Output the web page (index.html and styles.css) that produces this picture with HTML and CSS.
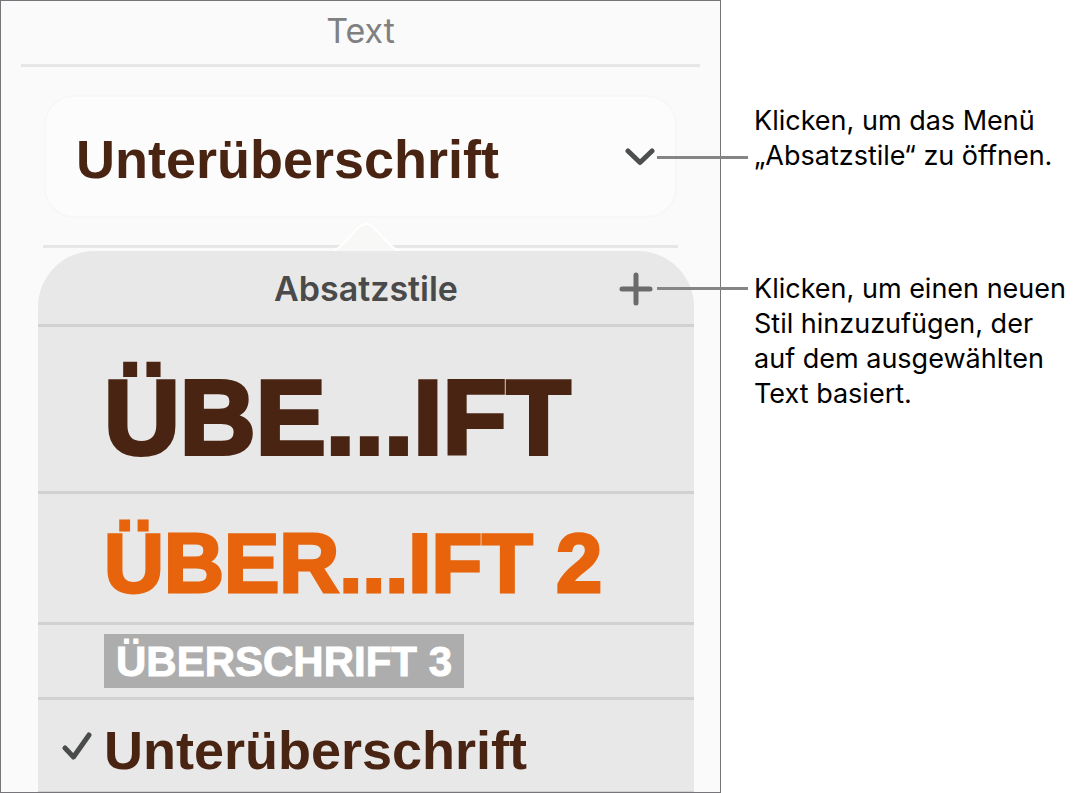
FILE: index.html
```html
<!DOCTYPE html>
<html lang="de">
<head>
    <meta charset="UTF-8">
    <meta name="viewport" content="width=device-width, initial-scale=1.0">
    <title>Absatzstile</title>
    <link rel="stylesheet" href="styles.css">
</head>
<body>
    <main class="figure">
        <section class="panel">
            <h1 class="panel-title">Text</h1>
            <button type="button" class="style-button" aria-haspopup="true" aria-expanded="true">
                <span class="subheading">Unterüberschrift</span>
                <svg class="chevron" viewBox="0 0 30 18" aria-hidden="true">
                    <path d="M3 3 L15 14.5 L27 3"/>
                </svg>
            </button>
            <div class="divider">
                <svg class="arrow" viewBox="0 0 66 28" aria-hidden="true">
                    <path d="M0 28 C5 26 8 23 12 19 L25 5 Q33 -3 41 5 L54 19 C58 23 61 26 66 28"/>
                </svg>
            </div>
            <div class="popover">
                <header class="popover-header">
                    <h2>Absatzstile</h2>
                    <button type="button" class="add-button" aria-label="Stil hinzufügen">
                        <svg viewBox="0 0 34 34" aria-hidden="true">
                            <path d="M17 3 V31 M3 17 H31"/>
                        </svg>
                    </button>
                </header>
                <button type="button" class="style-row row-heading"><span class="heading">ÜBE...IFT</span></button>
                <button type="button" class="style-row row-heading2"><span class="heading2">ÜBER...IFT 2</span></button>
                <button type="button" class="style-row row-heading3"><span class="heading3">ÜBERSCHRIFT 3</span></button>
                <button type="button" class="style-row row-subheading">
                    <svg class="check" viewBox="0 0 30 30" aria-hidden="true">
                        <path d="M3 17 L11.5 26 L27 4"/>
                    </svg>
                    <span class="subheading">Unterüberschrift</span>
                </button>
            </div>
        </section>
        <aside class="notes">
            <p class="note note-menu">Klicken, um das Menü<br>„Absatzstile“ zu öffnen.</p>
            <p class="note note-add">Klicken, um einen neuen<br>Stil hinzuzufügen, der<br>auf dem ausgewählten<br>Text basiert.</p>
        </aside>
    </main>
</body>
</html>
```

FILE: styles.css
```css
* {
    box-sizing: border-box;
}
body {
    margin: 0;
    background-color: #fff;
    font-family: Inter, "Liberation Sans", sans-serif;
    color: #000;
}
h1, h2, p {
    margin: 0;
}
button {
    font-family: inherit;
    border: none;
    padding: 0;
    background: none;
    text-align: left;
    cursor: pointer;
}
svg {
    display: block;
    fill: none;
    stroke-linecap: round;
    stroke-linejoin: round;
}
.figure {
    display: flex;
    align-items: stretch;
}
.panel {
    flex: 1;
    min-width: 0;
    border: 1px solid #77757a;
    background-color: #fafafa;
}
.panel-title {
    margin: 0 20px 28px;
    height: 66px;
    border-bottom: 3px solid #e6e6e6;
    font-size: 34px;
    line-height: 60px;
    font-weight: 400;
    text-align: center;
    color: #808080;
}
.style-button {
    display: flex;
    align-items: center;
    justify-content: space-between;
    width: calc(100% - 86px);
    height: 123px;
    margin: 0 43px;
    padding: 4px 20px 0 30px;
    border: 2px solid #f7f7f7;
    border-radius: 30px;
    background-color: #fcfcfc;
}
.heading, .heading2, .heading3, .subheading {
    font-family: "Liberation Sans", Arial, sans-serif;
    font-weight: 700;
}
.subheading {
    font-size: 54px;
    line-height: 62px;
    color: #4a2413;
}
.chevron {
    width: 30px;
    height: 18px;
    margin-bottom: 4px;
    stroke: #4d4f4f;
    stroke-width: 5;
}
.divider {
    position: relative;
    height: 3px;
    margin: 27px 42px 3px;
    background-color: #e6e6e6;
}
.arrow {
    position: absolute;
    left: calc(50% - 28px);
    bottom: -3px;
    width: 66px;
    height: 28px;
    fill: #f8f8f6;
    stroke: #fff;
    stroke-width: 2;
}
.popover {
    margin: 0 26px 0 37px;
    border-radius: 56px 56px 0 0;
    background-color: #e8e8e8;
}
.popover-header {
    display: grid;
    grid-template-columns: 1fr auto 1fr;
    align-items: center;
    height: 76px;
    padding: 2px 41px 0;
    border-bottom: 3px solid #d1d1d1;
}
.popover-header h2 {
    grid-column: 2;
    font-size: 34px;
    line-height: 40px;
    font-weight: 600;
    color: #4a4a4a;
}
.add-button {
    justify-self: end;
}
.add-button svg {
    width: 34px;
    height: 34px;
    stroke: #6b6b6b;
    stroke-width: 5;
}
.style-row {
    display: flex;
    align-items: center;
    width: 100%;
    padding-left: 66px;
    border-bottom: 3px solid #d1d1d1;
    white-space: nowrap;
}
.row-heading {
    height: 167px;
    padding-top: 18px;
}
.row-heading2 {
    height: 131px;
    padding-top: 12px;
}
.row-heading3 {
    height: 75px;
}
.row-subheading {
    height: 92px;
    gap: 12px;
    padding-top: 8px;
    padding-left: 24px;
    border-bottom-width: 1px;
}
.heading {
    font-size: 105px;
    line-height: 120px;
    color: #4a2413;
    -webkit-text-stroke: 4px #4a2413;
}
.heading2 {
    font-size: 83px;
    line-height: 96px;
    color: #e7640c;
    -webkit-text-stroke: 3px #e7640c;
}
.heading3 {
    padding: 2px 12px 0;
    background-color: #adadad;
    font-size: 42px;
    line-height: 52px;
    color: #fff;
    -webkit-text-stroke: 1px #fff;
}
.check {
    width: 30px;
    height: 30px;
    margin-bottom: 8px;
    stroke: #4a4c4c;
    stroke-width: 5;
}
.notes {
    display: flex;
    flex-direction: column;
    gap: 98px;
    width: 358px;
    padding-top: 103px;
    padding-left: 33px;
}
.note {
    position: relative;
    font-size: 27px;
    line-height: 35px;
    white-space: nowrap;
}
/* leader line back to the control */
.note::before {
    content: "";
    position: absolute;
    right: calc(100% + 6px);
    width: 91px;
    height: 3px;
    background-color: #858585;
}
.note-menu::before {
    top: 53px;
}
.note-add::before {
    top: 16px;
}
```
